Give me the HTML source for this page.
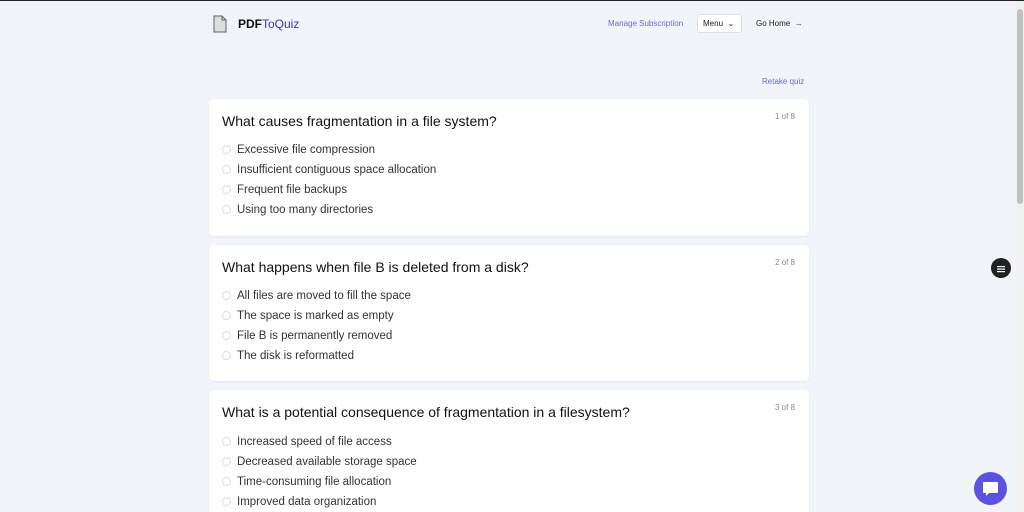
<!DOCTYPE html>
<html><head><style>
*{box-sizing:border-box;margin:0;padding:0}
html,body{width:1024px;height:512px;overflow:hidden}
body{background:#f1f4f9;font-family:"Liberation Sans",sans-serif;position:relative;border-top:1px solid #222}
.sb{position:absolute;right:0;top:0;width:8px;height:512px;background:#f1f1f1}
.sb i{position:absolute;left:1px;top:8px;width:6px;height:195px;background:#c1c1c1;border-radius:3px}
.hdr{position:absolute;top:0;left:0;width:1016px;height:46px}
.logo{position:absolute;left:213px;top:14px}
.brand{position:absolute;left:238px;top:16px;font-size:12px;font-weight:bold;color:#111}
.brand span{color:#3b35b5;font-weight:normal}
.ms{position:absolute;left:608px;top:18px;font-size:8px;color:#6b6bd6}
.menu{position:absolute;left:697px;top:13px;width:45px;height:19px;background:#fff;border:1px solid #dde1e7;border-radius:3px;font-size:8px;color:#222;padding:4px 0 0 5px}
.gh{position:absolute;left:756px;top:18px;font-size:8px;color:#222}
.rt{position:absolute;left:762px;top:76px;font-size:8px;color:#6b6bd6}
.card{position:absolute;left:209px;width:600px;background:#fff;border-radius:5px;box-shadow:0 1px 2px rgba(0,0,0,.06)}
.card h2{position:absolute;left:13px;top:14px;font-size:14px;font-weight:normal;color:#111}
.card .n{position:absolute;right:14px;top:13px;font-size:8px;color:#888}
.opt{position:absolute;left:13px;font-size:11.5px;color:#333}
.opt b{display:inline-block;width:9px;height:9px;border:1px solid #d8dbe0;border-radius:50%;margin-right:6px;vertical-align:-1px}
.fab1{position:absolute;left:991px;top:257px;width:20px;height:20px;border-radius:50%;background:#222}
.fab2{position:absolute;left:974px;top:471px;width:33px;height:33px;border-radius:50%;background:#5b52e0}
</style></head><body>
<div class="sb"><i></i></div>
<div class="hdr">
<svg class="logo" width="14" height="18" viewBox="0 0 14 18"><path d="M1 1h8l4 4v12H1z" fill="#ddd" stroke="#666" stroke-width="1"/><path d="M9 1v4h4" fill="none" stroke="#666"/></svg>
<div class="brand">PDF<span>ToQuiz</span></div>
<div class="ms">Manage Subscription</div>
<div class="menu">Menu &nbsp;⌄</div>
<div class="gh">Go Home &nbsp;→</div>
</div>
<div class="rt">Retake quiz</div>
<div class="card" style="top:98px;height:137px"><h2>What causes fragmentation in a file system?</h2><div class="n">1 of 8</div>
<div class="opt" style="top:45px"><b></b>Excessive file compression</div>
<div class="opt" style="top:65px"><b></b>Insufficient contiguous space allocation</div>
<div class="opt" style="top:85px"><b></b>Frequent file backups</div>
<div class="opt" style="top:105px"><b></b>Using too many directories</div></div>
<div class="card" style="top:244px;height:136px"><h2>What happens when file B is deleted from a disk?</h2><div class="n">2 of 8</div>
<div class="opt" style="top:45px"><b></b>All files are moved to fill the space</div>
<div class="opt" style="top:65px"><b></b>The space is marked as empty</div>
<div class="opt" style="top:85px"><b></b>File B is permanently removed</div>
<div class="opt" style="top:105px"><b></b>The disk is reformatted</div></div>
<div class="card" style="top:389px;height:140px"><h2>What is a potential consequence of fragmentation in a filesystem?</h2><div class="n">3 of 8</div>
<div class="opt" style="top:46px"><b></b>Increased speed of file access</div>
<div class="opt" style="top:66px"><b></b>Decreased available storage space</div>
<div class="opt" style="top:86px"><b></b>Time-consuming file allocation</div>
<div class="opt" style="top:106px"><b></b>Improved data organization</div></div>
<div class="fab1"><svg width="20" height="20"><rect x="6" y="8" width="8" height="1.2" fill="#fff"/><rect x="6" y="10.5" width="8" height="1.2" fill="#fff"/><rect x="6" y="13" width="8" height="1.2" fill="#fff"/></svg></div>
<div class="fab2"><svg width="33" height="33"><path d="M10 10h13a1 1 0 0 1 1 1v9a1 1 0 0 1-1 1h-8l-3 3v-3h-2a1 1 0 0 1-1-1v-9a1 1 0 0 1 1-1z" fill="#fff"/></svg></div>
</body></html>
